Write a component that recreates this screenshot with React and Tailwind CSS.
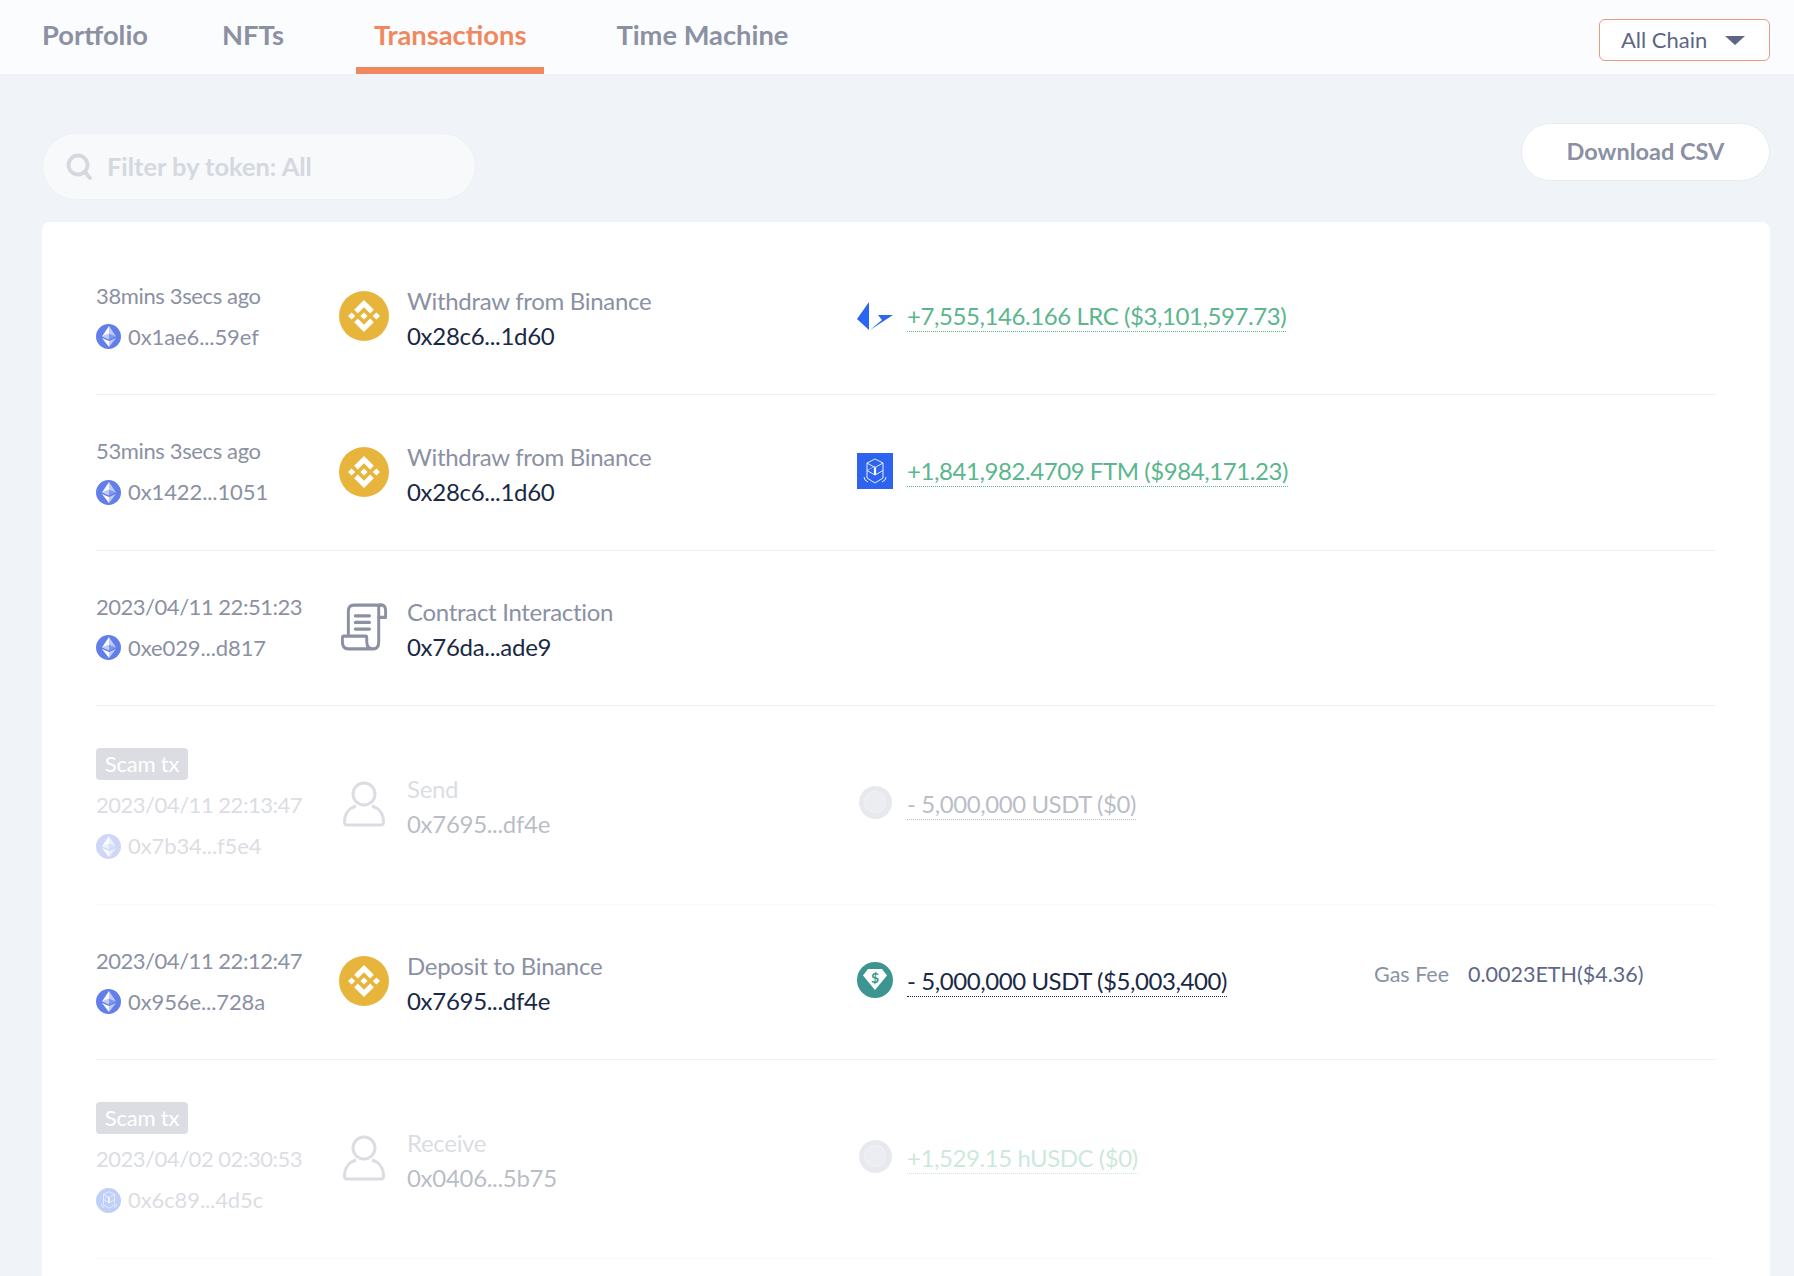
import React from "react";
import { SiBinance } from "react-icons/si";

const EthIcon = () => (
  <span className="w-[25px] h-[25px] rounded-full bg-[#627eea] flex items-center justify-center shrink-0">
    <svg width="14" height="21" viewBox="0 0 14 21">
      <path d="M7 0 L7 7.8 L14 10.6 Z" fill="#fff" fillOpacity="0.6" />
      <path d="M7 0 L0 10.6 L7 7.8 Z" fill="#fff" />
      <path d="M7 14.9 L7 21 L14 12 Z" fill="#fff" fillOpacity="0.6" />
      <path d="M7 14.9 L0 12 L7 21 Z" fill="#fff" />
      <path d="M7 13.4 L14 10.6 L7 7.8 Z" fill="#fff" fillOpacity="0.2" />
      <path d="M0 10.6 L7 13.4 L7 7.8 Z" fill="#fff" fillOpacity="0.6" />
    </svg>
  </span>
);

const Cube = ({ size = 24 }) => (
  <svg width={size} height={size} viewBox="0 0 24 26" fill="none" stroke="#fff" strokeWidth="0.9">
    <path d="M12 1 L20 5 L20 20 L12 25 L4 20 L4 5 Z" />
    <path d="M4 5 L12 9.5 L20 5" />
    <path d="M4 12.5 L12 17 L20 12.5" />
    <path d="M4 12.5 L12 8" opacity="0.5" />
    <path d="M12 9.5 L12 17" strokeWidth="2.2" />
    <path d="M1 19 L2 22 L5 24" />
    <path d="M19 24 L22 22 L23 19" />
  </svg>
);

const FtmRound = () => (
  <span className="w-[25px] h-[25px] rounded-full bg-[#2d63ee] flex items-center justify-center shrink-0">
    <Cube size={18} />
  </span>
);

const BinanceIcon = () => (
  <span className="w-[50px] h-[50px] rounded-full bg-[#e8b53c] flex items-center justify-center shrink-0">
    <SiBinance size={32} color="#fff" />
  </span>
);

const ScrollIcon = () => (
  <span className="w-[50px] flex justify-center shrink-0">
    <svg width="46" height="48" viewBox="0 0 50 47" preserveAspectRatio="none" fill="none" stroke="#8b91a3" strokeWidth="3.2" strokeLinejoin="round" strokeLinecap="round">
      <path d="M8 31 V8 Q8 2 14 2 H43" />
      <path d="M41 4 V38 Q41 45 35 45 H8 Q1.5 45 1.5 38 V34 Q1.5 32.5 3 32.5 H26.5 Q28 32.5 28 34 V38 Q28 45 35 45" />
      <path d="M41 3 Q43 1.5 45 2 Q48.5 3 48.5 8 V14 H41" />
      <path d="M15.5 12.5 H31 M15.5 19 H31 M15.5 25.5 H31" />
    </svg>
  </span>
);

const PersonIcon = () => (
  <span className="w-[50px] flex justify-center shrink-0">
    <svg width="42" height="46" viewBox="0 0 42 46" fill="none" stroke="#8b91a3" strokeWidth="3" className="shrink-0">
      <circle cx="21" cy="13" r="11" />
      <path d="M13 25 C6 27 1.5 33 1.5 41 Q1.5 44 4 44 H38 Q40.5 44 40.5 41 C40.5 33 36 27 29 25" strokeLinejoin="round" />
    </svg>
  </span>
);

const LrcIcon = () => (
  <svg width="36" height="28" viewBox="0 0 36 28" fill="#2b66f0" className="shrink-0">
    <path d="M12 0 L12 28 L0 17 Z" />
    <path d="M21 13 L36 13 L13 28 L25 18 Z" />
  </svg>
);

const FtmIcon = () => (
  <span className="w-9 h-9 -mt-[2px] bg-[#2d63ee] flex items-center justify-center shrink-0">
    <Cube size={26} />
  </span>
);

const UsdtIcon = () => (
  <span className="w-9 h-9 -mt-[3px] rounded-full bg-[#3c9590] flex items-center justify-center shrink-0">
    <svg width="26" height="23" viewBox="0 0 26 23">
      <path d="M6 1 H20 L25 7.5 L13 22 L1 7.5 Z" fill="#fff" />
      <text x="13" y="14.5" textAnchor="middle" fontSize="14" fontWeight="700" fontFamily="Lato, sans-serif" fill="#3c9590">$</text>
    </svg>
  </span>
);

const UnknownCoin = () => (
  <span className="w-[33px] h-[33px] rounded-full bg-[#b5bac8] flex items-center justify-center shrink-0 mx-[1.5px] -mt-[4px]">
    <span className="w-[22px] h-[22px] rounded-full bg-[#c3c7d3] border border-dotted border-[#dfe2e8]" />
  </span>
);

const Amount = ({ color, text }) => (
  <span className={`ml-[14px] h-[31px] leading-[30px] text-[24px] tracking-[-0.43px] border-b border-dotted border-current whitespace-nowrap ${color}`}>
    {text}
  </span>
);

const rows = [
  { time: "38mins 3secs ago", addr: "0x1ae6...59ef", icon: <BinanceIcon />, title: "Withdraw from Binance", hex: "0x28c6...1d60", coin: <LrcIcon />, amount: "+7,555,146.166 LRC ($3,101,597.73)", color: "text-[#5ab68d]" },
  { time: "53mins 3secs ago", addr: "0x1422...1051", icon: <BinanceIcon />, title: "Withdraw from Binance", hex: "0x28c6...1d60", coin: <FtmIcon />, amount: "+1,841,982.4709 FTM ($984,171.23)", color: "text-[#5ab68d]" },
  { time: "2023/04/11 22:51:23", addr: "0xe029...d817", icon: <ScrollIcon />, title: "Contract Interaction", hex: "0x76da...ade9" },
  { scam: true, time: "2023/04/11 22:13:47", addr: "0x7b34...f5e4", icon: <PersonIcon />, title: "Send", hex: "0x7695...df4e", coin: <UnknownCoin />, amount: "- 5,000,000 USDT ($0)", color: "text-[#192945]" },
  { time: "2023/04/11 22:12:47", addr: "0x956e...728a", icon: <BinanceIcon />, title: "Deposit to Binance", hex: "0x7695...df4e", coin: <UsdtIcon />, amount: "- 5,000,000 USDT ($5,003,400)", color: "text-[#192945]", gas: "0.0023ETH($4.36)" },
  { scam: true, time: "2023/04/02 02:30:53", addr: "0x6c89...4d5c", chain: <FtmRound />, icon: <PersonIcon />, title: "Receive", hex: "0x0406...5b75", coin: <UnknownCoin />, amount: "+1,529.15 hUSDC ($0)", color: "text-[#5ab68d]" },
];

const Row = ({ r }) => (
  <div className={`flex items-center pt-[41px] pb-[42.5px] border-b border-[#eef0f4] ${r.scam ? "opacity-30" : ""}`}>
    <div className="w-[243px] shrink-0 flex flex-col text-[22px] leading-[30px] text-[#8b91a3]">
      {r.scam && (
        <span className="self-start mt-[1px] w-[92px] h-[32px] mb-[10px] rounded-[4px] bg-[#8b91a3] text-white text-center leading-[32px] tracking-[-0.2px]">Scam tx</span>
      )}
      <div className={`mb-[11px] whitespace-nowrap ${r.time.includes("/") ? "tracking-[-0.48px]" : "tracking-[-0.37px]"}`}>{r.time}</div>
      <div className="flex items-center gap-[7px] whitespace-nowrap tracking-[-0.1px]">
        {r.chain || <EthIcon />}
        {r.addr}
      </div>
    </div>
    <div className="w-[518px] shrink-0 flex items-center gap-[18px]">
      {r.icon}
      <div className="pt-[5px] text-[24px] leading-[30px] tracking-[-0.3px]">
        <div className="mb-[5px] text-[#8b91a3]">{r.title}</div>
        <div className="text-[#192945]">{r.hex}</div>
      </div>
    </div>
    <div className="w-[517px] shrink-0 flex items-center">
      {r.coin}
      {r.amount && <Amount color={r.color} text={r.amount} />}
    </div>
    {r.gas && (
      <div className="flex pb-[14px] text-[21.5px] leading-[26px] whitespace-nowrap">
        <span className="w-[94px] text-[#8b91a3]">Gas Fee</span>
        <span className="text-[#5d6785]">{r.gas}</span>
      </div>
    )}
  </div>
);

export default function App() {
  return (
    <div className="h-[1276px] overflow-hidden bg-[#f0f3f8] font-['Lato','Liberation_Sans',sans-serif]">
      <header className="h-[75px] bg-[#fbfcfe] border-b border-[#eef1f6] flex items-start justify-between pl-[42px] pr-[24px]">
        <nav className="flex items-start gap-[72px] text-[27.3px] font-bold leading-[70px] h-[74px] text-[#8b91a3]">
          <span>Portfolio</span>
          <span className="ml-[2px]">NFTs</span>
          <span className="px-[18px] h-[74px] text-[#f0885f] border-b-[7px] border-[#f0885f]">Transactions</span>
          <span>Time Machine</span>
        </nav>
        <div className="mt-[19px] w-[171px] h-[42px] rounded-[6px] border border-[#eb9a80] bg-white flex items-center pl-[21px] pr-[24px] justify-between">
          <span className="text-[22px] leading-[30px] -mt-[1px] text-[#5d6785]">All Chain</span>
          <span className="w-0 h-0 border-x-[10px] border-x-transparent border-t-[9px] border-t-[#5d6785]" />
        </div>
      </header>

      <main className="pl-[42px] pr-[24px]">
        <div className="flex items-start justify-between pt-[48px] h-[147px]">
          <div className="mt-[10px] w-[434px] h-[67px] rounded-full bg-[#f7f9fb] border border-[#edf0f4] flex items-center pl-[23px] gap-[14px]">
            <svg width="27" height="27" viewBox="0 0 27 27" fill="none" stroke="#d5d8df" strokeWidth="3.8" strokeLinecap="round">
              <circle cx="12" cy="12" r="9.5" />
              <path d="M19 19 L24 25" />
            </svg>
            <span className="text-[25.4px] font-bold text-[#d5d8df]">Filter by token: All</span>
          </div>
          <button className="w-[249px] h-[58px] rounded-full bg-white border border-[#e9ecf1] text-[23.5px] font-bold text-[#8b91a3]">
            Download CSV
          </button>
        </div>

        <section className="bg-white rounded-t-[8px] pt-[17.5px] px-[54px] h-[1100px]">
          {rows.map((r, i) => (
            <Row key={i} r={r} />
          ))}
        </section>
      </main>
    </div>
  );
}
